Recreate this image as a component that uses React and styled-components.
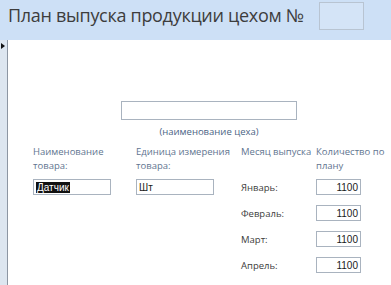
import React from "react";
import styled, { createGlobalStyle } from "styled-components";

const Global = createGlobalStyle`
  html, body {
    margin: 0;
    padding: 0;
    background: #ffffff;
  }
  body {
    width: 391px;
    height: 285px;
    overflow: hidden;
    font-family: "Open Sans", "Noto Sans", sans-serif;
  }
`;

const Page = styled.div`
  display: flex;
  flex-direction: column;
  width: 391px;
  height: 285px;
`;

const Header = styled.div`
  height: 40px;
  flex: none;
  background: #cde0f6;
  display: flex;
  align-items: flex-start;
  padding: 2px 0 0 8px;
  box-sizing: border-box;
  gap: 15px;
`;

const Title = styled.h1`
  margin: 0;
  font-size: 18px;
  font-weight: 400;
  color: #3d3d3d;
  line-height: 26px;
  letter-spacing: -0.3px;
  white-space: nowrap;
`;

const NumberBox = styled.div`
  width: 45px;
  height: 28px;
  border: 1px solid #b8c4d2;
  background: #d4e4f7;
  box-sizing: border-box;
`;

const Body = styled.div`
  flex: 1;
  display: flex;
`;

const Selector = styled.div`
  width: 8px;
  flex: none;
  background: #dde6f0;
  border-right: 1px solid #8d96a3;
  box-sizing: border-box;
  position: relative;

  &::after {
    content: "";
    position: absolute;
    left: 1px;
    top: 3px;
    border-top: 3px solid transparent;
    border-bottom: 3px solid transparent;
    border-left: 4px solid #111;
  }
`;

const Detail = styled.div`
  flex: 1;
  padding: 61px 0 0 25px;
  display: flex;
  flex-direction: column;
`;

const ShopBlock = styled.div`
  display: flex;
  flex-direction: column;
  align-items: center;
  width: 176px;
  margin-left: 88px;
`;

const Field = styled.div`
  width: ${(p) => p.$w}px;
  height: ${(p) => p.$h || 16}px;
  border: 1px solid #a9b3bf;
  background: #fff;
  box-sizing: border-box;
  display: flex;
  align-items: center;
  justify-content: ${(p) => (p.$right ? "flex-end" : "flex-start")};
  padding: 0 2px;
  font-size: 10px;
  color: #1a1a1a;
  font-family: "Liberation Sans", Arial, sans-serif;
`;

const Caption = styled.div`
  margin-top: 5px;
  font-size: 9.5px;
  color: #4a6384;
  white-space: nowrap;
`;

const Grid = styled.div`
  margin-top: 7px;
  display: grid;
  grid-template-columns: 103px 105px 75px 60px;
  row-gap: 10px;
`;

const Head = styled.div`
  font-size: 9.5px;
  line-height: 14px;
  color: #5f7590;
  white-space: nowrap;
  margin-bottom: -4px;
`;

const Month = styled.div`
  font-size: 9.5px;
  color: #3c3c3c;
  display: flex;
  align-items: center;
  height: 16px;
`;

const Selected = styled.span`
  background: #111;
  color: #fff;
  padding: 0 1px;
`;

const Empty = styled.div``;

const months = ["Январь:", "Февраль:", "Март:", "Апрель:"];

export default function App() {
  return (
    <Page>
      <Global />
      <Header>
        <Title>План выпуска продукции цехом №</Title>
        <NumberBox />
      </Header>
      <Body>
        <Selector />
        <Detail>
          <ShopBlock>
            <Field $w={176} $h={19} />
            <Caption>(наименование цеха)</Caption>
          </ShopBlock>
          <Grid>
            <Head>
              Наименование
              <br />
              товара:
            </Head>
            <Head>
              Единица измерения
              <br />
              товара:
            </Head>
            <Head>Месяц выпуска</Head>
            <Head>
              Количество по
              <br />
              плану
            </Head>
            {months.map((m, i) => (
              <React.Fragment key={m}>
                {i === 0 ? (
                  <Field $w={78}>
                    <Selected>Датчик</Selected>
                  </Field>
                ) : (
                  <Empty />
                )}
                {i === 0 ? <Field $w={78}>Шт</Field> : <Empty />}
                <Month>{m}</Month>
                <Field $w={45} $right>
                  1100
                </Field>
              </React.Fragment>
            ))}
          </Grid>
        </Detail>
      </Body>
    </Page>
  );
}
